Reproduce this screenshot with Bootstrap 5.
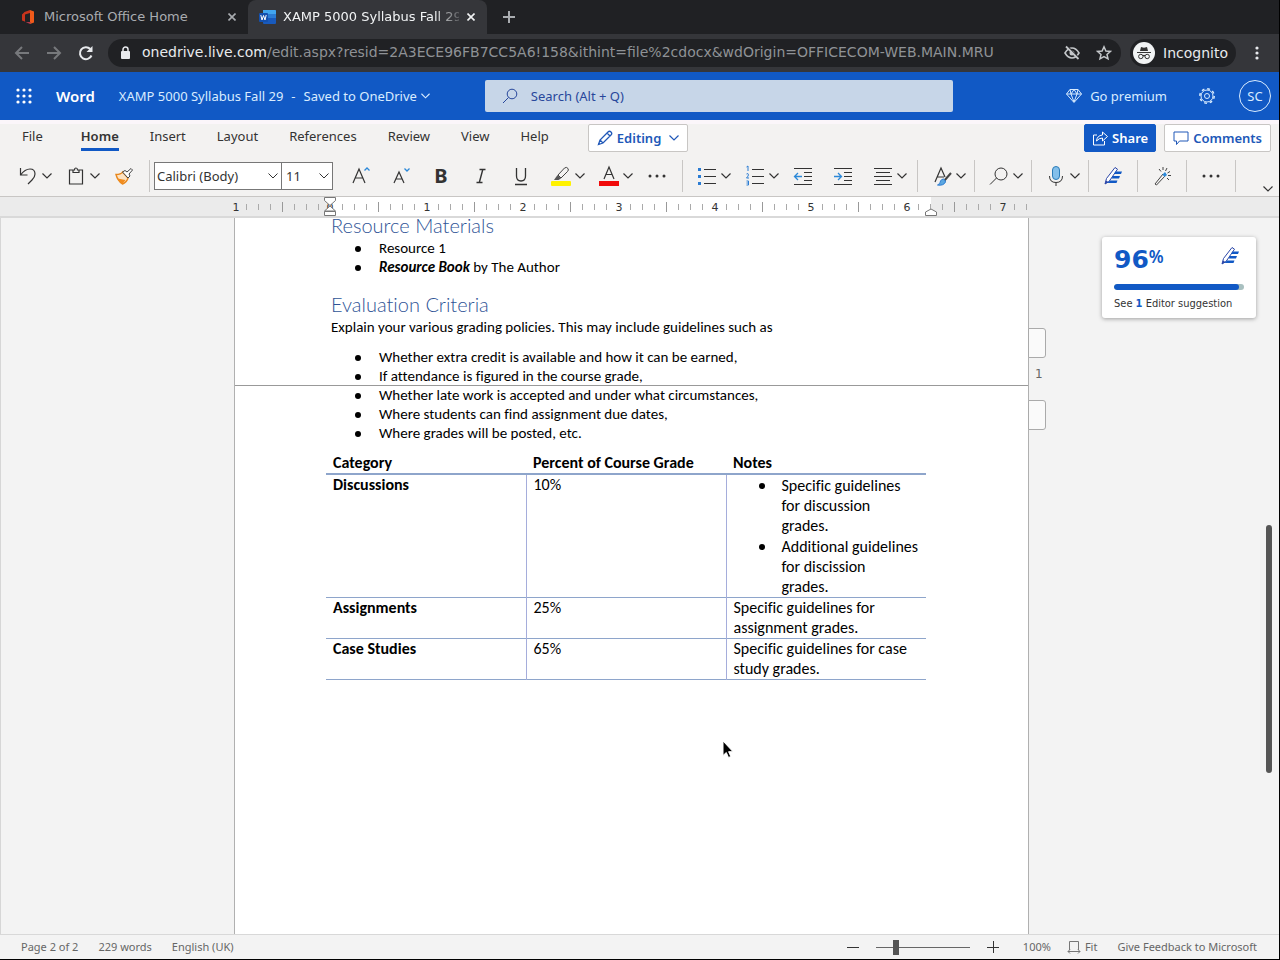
<!DOCTYPE html>
<html lang="en">
<head>
<meta charset="utf-8">
<meta name="viewport" content="width=device-width, initial-scale=1">
<title>XAMP 5000 Syllabus Fall 29</title>
<link href="https://cdn.jsdelivr.net/npm/bootstrap@5.3.0/dist/css/bootstrap.min.css" rel="stylesheet">
<style>
  :root { --word: #1159c5; --ribbon: #f3f2f1; --ink: #333; --ui: "Noto Sans", "Open Sans", sans-serif; --chrome: "DejaVu Sans", sans-serif; }
  body { font: 13px/20px var(--ui); color: var(--ink); height: 100vh; border-right: 1px solid #000; border-bottom: 1px solid #000; overflow: hidden; }
  svg { display: block; flex: none; fill: none; }
  button { background: none; border: 0; padding: 0; color: inherit; font: inherit; }
  .st { stroke: currentColor; stroke-width: 1; }
  .x2 { stroke: currentColor; stroke-width: 2; }

  /* browser frame */
  .tabstrip { background: #202124; height: 34px; font: 13px/32px var(--chrome); color: #a9acb0; }
  .btab { width: 248px; padding: 0 8px 0 21px; }
  .btab.current { width: 239px; background: #35363a; color: #f1f3f4; border-radius: 8px 8px 0 0; padding: 0 8px 0 11px; }
  .btab-title { overflow: hidden; white-space: nowrap; min-width: 0; margin-left: 9px; }
  .current .btab-title { margin: 0 4px 0 7px; -webkit-mask-image: linear-gradient(90deg, #000 86%, #0003); mask-image: linear-gradient(90deg, #000 86%, #0003); }
  .toolbar { background: #35363a; height: 38px; padding: 0 15px 0 14px; color: #e8eaed; font: 14px/28px var(--chrome); }
  .toolbar .nav-ico { width: 16px; margin-right: 16px; }
  .dim { color: #77797c; }
  .omnibox { background: #202124; border-radius: 14px; height: 28px; padding: 0 9px 0 12px; margin-left: -2px; white-space: nowrap; }
  .address { color: #8f9296; margin-left: 10px; line-height: 26px; padding-bottom: 2px; }
  .address span { color: #e8eaed; }
  .incog { background: #202124; border-radius: 14px; height: 28px; padding: 0 8px 0 3px; margin-left: 9px; }

  /* application header */
  .apphead { background: var(--word); height: 48px; color: #d9ecff; padding: 0 8px 0 16px; }
  .brandname { font-size: 15px; font-weight: 600; color: #fff; margin: 0 24px; }
  .titlebtn { width: 366px; text-align: left; }
  .titlebtn i { font-style: normal; margin: 0 8px; }
  .searchbox { background: #c7d6e8; border-radius: 2px; width: 468px; height: 32px; color: #27479b; padding-left: 17px; }
  .searchbox input { background: none; border: 0; padding: 0; color: inherit; font: inherit; outline: 0; margin-left: 13px; }
  .searchbox input::placeholder { color: #27479b; opacity: 1; }
  .gear { margin: 0 24px 0 32px; }
  .avatar { width: 32px; height: 32px; border: 1px solid #d9ecff; border-radius: 50%; text-align: center; }

  /* ribbon */
  .ribbon { background: var(--ribbon); border-bottom: 1px solid #c8c6c4; border-top: 4px solid #fbf6fa; }
  .rtabs { height: 32px; padding: 0 8px 0 22px; }
  .rtab { color: var(--ink); text-decoration: none; margin-right: 31px; padding: 2px 0 2px; height: 27px; border-bottom: 3px solid transparent; }
  .rtab:first-child { margin-right: 38px; }
  .rtab.active { font-weight: 600; border-color: var(--word); }
  .cmd { height: 28px; border: 1px solid #c8c6c4; border-radius: 2px; background: #fff; color: #2058b8; font-weight: 600; padding: 0 8px; display: flex; align-items: center; gap: 4px; }
  .cmd.primary { background: var(--word); border-color: var(--word); color: #fff; padding: 0 7px; }
  .tools { height: 40px; padding-left: 14px; position: relative; }
  .tgroup { display: flex; align-items: center; height: 32px; border-right: 1px solid #c8c6c4; padding: 0 8px 0 10px; }
  .tgroup.first { padding: 0 11px 0 0; }
  .tgroup.fonts { padding: 0 11px 0 4px; }
  .tgroup.solo { padding: 0 10px; }
  .tool { width: 28px; height: 32px; display: flex; align-items: center; justify-content: center; }
  .wide { width: 40px; }
  .split { width: 38px; height: 32px; display: flex; align-items: center; }
  .split > svg:first-child { margin-left: 3px; margin-right: 3px; }
  .pair { margin-right: 10px; }
  .fontbox { appearance: none; height: 28px; border: 1px solid #777; border-radius: 0; padding: 0 2px; color: var(--ink); font: inherit; background: #fff url("data:image/svg+xml,%3Csvg xmlns='http://www.w3.org/2000/svg' width='10' height='6' fill='none' stroke='%23333'%3E%3Cpath d='M.5.5 5 5 9.5.5'/%3E%3C/svg%3E") no-repeat right 3px center; }
  .fontname { width: 128px; }
  .fontsize { width: 52px; margin: 0 8px 0 -1px; padding-left: 4px; }
  .underl { margin-right: 6px; }
  .expand { position: absolute; right: 6px; bottom: 4px; }

  /* ruler */
  .ruler { background: #ebebeb; height: 21px; border-bottom: 2px solid #d9d9d9; padding-right: 7px; display: flex; justify-content: center; overflow: hidden; }
  .ruler text { font: 11px "DejaVu Sans", sans-serif; fill: #333; text-anchor: middle; }

  /* document */
  .workspace { background: #f3f3f3; overflow: hidden; min-height: 0; padding-right: 17px; border-left: 1px solid #d6d6d6; position: relative; }
  .sheet { display: flow-root; width: 795px; margin: 0 auto; background: #fff; border: 1px solid #b0b0b0; border-width: 0 1px; padding: 0 96px; position: relative; height: 100%; font: 15px/19px Carlito, Lato, sans-serif; font-variant-ligatures: none; color: #000; }
  .sheet h1 { font: 300 20px/24px Lato, Carlito, sans-serif; font-variant-ligatures: none; color: #2f5496; margin: 15px 0 2px; }
  .sheet h1:first-child { margin-top: -5px; }
  .sheet p { margin: 0 0 11px; }
  .dots { list-style: none; padding-left: 48px; margin: 0; }
  .criteria { margin-bottom: 10px; }
  .dots li::before { content: ""; display: inline-block; width: 6px; height: 6px; border-radius: 50%; background: #000; margin: 0 18px 0 -24px; vertical-align: 1px; }
  .pagebreak { position: absolute; left: 0; right: 0; top: 167px; margin: 0; border: 0; border-top: 1px solid #999; opacity: 1; }
  .grades { width: 600px; margin-left: -5px; table-layout: fixed; font-size: 16px; line-height: 20px; border-collapse: collapse; }
  .grades th, .grades td { padding: 0 7px; vertical-align: top; }
  .grades thead th { border-bottom: 2px solid #8ea5cb; }
  .grades tbody tr { border-bottom: 1px solid #8ea5cb; }
  .grades tbody td { border-left: 1px solid #a5addb; }
  .grades td .dots { margin-right: -4px; }
  .grades .dots li { margin-top: 1px; padding-right: 4px; }
  .grades .dots li::before { margin-right: 17px; margin-left: -23px; vertical-align: 2px; }
  .flag { position: absolute; left: 793px; width: 18px; height: 30px; border: 1px solid #aaa; border-radius: 0 3px 3px 0; background: #fafafa; }
  .flag.upper { top: 110px; }
  .flag.lower { top: 182px; }
  .flagnum { position: absolute; left: 800px; top: 146px; font: 12px/20px var(--chrome); color: #666; }
  .score { position: absolute; right: 23px; top: 19px; width: 154px; height: 81px; background: #fff; border-radius: 3px; box-shadow: 0 1px 4px rgba(0,0,0,.35); padding: 9px 12px; font: 11px/16px "DejaVu Sans Condensed", "DejaVu Sans", sans-serif; }
  .score b { color: var(--word); }
  .pct { font: bold 25px/28px var(--chrome); color: var(--word); }
  .pct small { font: 600 17px/22px "Noto Sans", sans-serif; }
  .score .progress { height: 6px; border-radius: 3px; background: #a9c0c0; margin: 10px 0 6px; }
  .score .progress-bar { background: var(--word); border-radius: 3px; }
  .thumb { position: absolute; right: 7px; top: 307px; width: 6px; height: 248px; border-radius: 3px; background: #555; }
  .pointer { position: absolute; left: 721px; top: 522px; }

  /* status bar */
  .status { background: #f3f3f3; border-top: 1px solid #d8d8d8; height: 25px; font-size: 11px; line-height: 24px; color: #666; padding: 0 22px 0 21px; }
  .status > span { margin-right: 20px; }
  .status button { color: #666; }
  .fitbtn { margin: 0 20px 0 16px; }
  .zoomer { appearance: none; width: 94px; height: 16px; margin: 0 17px; background: linear-gradient(#666, #666) center / 100% 1px no-repeat; }
  .zoomer::-webkit-slider-thumb { appearance: none; width: 6px; height: 15px; background: #555; }
</style>
</head>
<body class="d-flex flex-column">

<svg width="0" height="0" class="position-absolute" aria-hidden="true">
  <symbol id="chev" viewBox="0 0 10 6"><path class="st" style="stroke-width:1.2" d="M.5.5 5 5 9.5.5"/></symbol>
  <symbol id="close" viewBox="0 0 8 8"><path class="x2" d="M.5.5 7.5 7.5M7.5.5.5 7.5" style="stroke-width:1.6"/></symbol>
  <symbol id="editor" viewBox="0 0 20 20"><path d="M2 18 3.500 12.500 12 1.500 14.500 3.200 6 15.500Z" stroke="#2b46a8" fill="#fff"/><path d="M2 18 3 14.500 5.500 16Z" fill="#2b46a8"/><path d="M12.500 5.500h6.500l-1 2.500h-7zM10 10h7l-1 2.500H8.500zM7 14.500h7.500l-1 2.500H4.500z" fill="#1159c5"/></symbol>
</svg>

<header>
  <div class="tabstrip d-flex">
    <div class="btab d-flex align-items-center">
      <svg width="14" height="16" viewBox="0 0 14 16"><path d="M9 1 3.500 3 1 5.500v6L4 12.500V5.500L9 4z" fill="#c8341c"/><path d="M9 1l4 1.500v11L9 15z" fill="#f05a1a"/><path d="M2.500 12 9 15l1-2H4z" fill="#b5384c"/></svg>
      <span class="btab-title flex-fill">Microsoft Office Home</span>
      <button aria-label="Close tab" class="mx-1"><svg width="8" height="8"><use href="#close"/></svg></button>
    </div>
    <div class="btab current d-flex align-items-center">
      <svg width="17" height="16" viewBox="0 0 17 16"><rect x="4" y="1" width="13" height="14" rx="1" fill="#185abd"/><path d="M4 1h12q1 0 1 1v3H4z" fill="#41a5ee"/><path d="M4 5h13v4H4z" fill="#2b7cd3"/><rect y="4" width="9" height="9" rx="1" fill="#1450ad"/><path d="M1.800 6 3 11 4.500 6.500 6 11 7.200 6" stroke="#fff"/></svg>
      <span class="btab-title flex-fill">XAMP 5000 Syllabus Fall 29</span>
      <button aria-label="Close tab" class="mx-1"><svg width="8" height="8"><use href="#close"/></svg></button>
    </div>
    <button aria-label="New tab" class="ms-3"><svg width="12" height="12"><path class="x2" d="M6 0v12M0 6h12"/></svg></button>
  </div>

  <div class="toolbar d-flex align-items-center">
    <button aria-label="Back" class="nav-ico dim"><svg width="16" height="16"><path class="x2" d="M15 8H2M8 2 2 8l6 6"/></svg></button>
    <button aria-label="Forward" class="nav-ico dim"><svg width="16" height="16"><path class="x2" d="M1 8h13M8 2l6 6-6 6"/></svg></button>
    <button aria-label="Reload" class="nav-ico"><svg width="16" height="16"><path class="x2" d="M13.500 10.500A6 6 0 1 1 12.300 4"/><path d="M14.500 1v6h-6z" fill="currentColor"/></svg></button>
    <div class="omnibox d-flex align-items-center flex-fill">
      <svg width="12" height="14"><rect x="1" y="5" width="9" height="8" rx="1" fill="#e8eaed"/><path d="M3 5V3.500a2.500 2.500 0 0 1 5 0V5" stroke="#e8eaed" stroke-width="1.500"/></svg>
      <span class="address flex-fill"><span>onedrive.live.com</span>/edit.aspx?resid=2A3ECE96FB7CC5A6!158&amp;ithint=file%2cdocx&amp;wdOrigin=OFFICECOM-WEB.MAIN.MRU</span>
      <button aria-label="Third-party cookies blocked" class="me-3"><svg width="16" height="16"><path d="M1 8q3-5 7-5t7 5q-3 5-7 5T1 8z" stroke="#c4c7ca" stroke-width="1.600"/><circle cx="8" cy="8" r="2.500" fill="#c4c7ca"/><path d="M3.500 1.500 15.500 13.500" stroke="#202124" stroke-width="1.500"/><path d="M2 1.500 14.500 14" stroke="#c4c7ca" stroke-width="1.800"/></svg></button>
      <button aria-label="Bookmark"><svg width="16" height="16"><path d="M8 1.800 9.900 6l4.500.4-3.400 3 1 4.400L8 11.500 4 13.800l1-4.400-3.400-3L6.100 6z" stroke="#c4c7ca" stroke-width="1.500"/></svg></button>
    </div>
    <div class="incog d-flex align-items-center">
      <svg width="22" height="22"><circle cx="11" cy="11" r="11" fill="#f1f3f4"/><path d="M7 9l1-4 3 .7L14 5l1 4z" fill="#333"/><path d="M4 10.500h14M10 14q1-1 2 0" stroke="#333" stroke-width="1.200"/><circle cx="7.800" cy="14.500" r="2.200" stroke="#333"/><circle cx="14.200" cy="14.500" r="2.200" stroke="#333"/></svg>
      <span class="ms-2">Incognito</span>
    </div>
    <button aria-label="Browser menu" class="ms-3"><svg width="12" height="16"><g fill="#e8eaed"><circle cx="5" cy="3" r="1.600"/><circle cx="5" cy="8" r="1.600"/><circle cx="5" cy="13" r="1.600"/></g></svg></button>
  </div>

  <div class="apphead d-flex align-items-center">
    <button aria-label="App launcher"><svg width="16" height="16"><g fill="#fff"><circle cx="2" cy="2" r="1.600"/><circle cx="8" cy="2" r="1.600"/><circle cx="14" cy="2" r="1.600"/><circle cx="2" cy="8" r="1.600"/><circle cx="8" cy="8" r="1.600"/><circle cx="14" cy="8" r="1.600"/><circle cx="2" cy="14" r="1.600"/><circle cx="8" cy="14" r="1.600"/><circle cx="14" cy="14" r="1.600"/></g></svg></button>
    <span class="brandname">Word</span>
    <button class="titlebtn d-flex align-items-center">XAMP 5000 Syllabus Fall 29<i>-</i>Saved to OneDrive<svg class="ms-1" width="9" height="6"><use href="#chev"/></svg></button>
    <label class="searchbox d-flex align-items-center">
      <svg width="16" height="16"><circle class="st" cx="10" cy="6" r="4.800"/><path class="st" d="M6.500 9.500 1 15"/></svg>
      <input class="flex-fill" type="search" placeholder="Search (Alt + Q)" aria-label="Search">
    </label>
    <button class="d-flex align-items-center ms-auto"><svg class="me-2" width="16" height="16"><path class="st" d="M4 1.500h8L15.500 6 8 14.500.5 6zM.5 6h15M5 6l3 8 3-8L8 1.500zM4 1.500 5 6M12 1.500 11 6"/></svg>Go premium</button>
    <button aria-label="Settings" class="gear"><svg width="16" height="16" viewBox="0 0 16 16"><circle class="st" cx="8" cy="8" r="2.500"/><circle class="st" cx="8" cy="8" r="6"/><circle cx="8" cy="8" r="7.200" stroke="currentColor" stroke-width="1.500" stroke-dasharray="2.800 2.850"/></svg></button>
    <button class="avatar">SC</button>
  </div>
</header>

<div class="ribbon">
  <nav class="rtabs d-flex">
    <a class="rtab" href="#">File</a><a class="rtab active" href="#">Home</a><a class="rtab" href="#">Insert</a><a class="rtab" href="#">Layout</a><a class="rtab" href="#">References</a><a class="rtab" href="#">Review</a><a class="rtab" href="#">View</a><a class="rtab" href="#">Help</a>
    <button class="cmd ms-2"><svg width="16" height="16"><path class="st" d="M1.500 14.500 3 10 11 2q1.500-1.500 3 0t0 3l-8 8zM10 3l3 3M3 10l3 3" style="stroke-width:1.300"/></svg>Editing<svg class="ms-1" width="10" height="6"><use href="#chev"/></svg></button>
    <button class="cmd primary ms-auto me-2"><svg width="16" height="16"><path class="st" d="M5 5H1.500v10h11v-4M4.500 11Q5 5.500 10.500 5V2L15.500 6.500l-5 4.500V8Q7 8 4.500 11z"/></svg>Share</button>
    <button class="cmd"><svg width="16" height="16"><path class="st" d="M1 2h14v9H6.500L3.500 14.500V11H1z"/></svg>Comments</button>
  </nav>

  <div class="tools d-flex align-items-center">
    <div class="tgroup first">
      <button class="split pair" aria-label="Undo"><svg width="22" height="22"><path class="st" d="M3.500 3v7h7M3.500 10Q8 4 13 4q5 0 5 5 0 3-3 6l-4 4" style="stroke-width:1.200"/></svg><svg width="10" height="6"><use href="#chev"/></svg></button>
      <button class="split pair" aria-label="Paste"><svg width="22" height="22"><path class="st" d="M9 5H4.500v14h13V5H14M8 7.500V5h1.500q0-2 1.500-2t1.500 2H14v2.500z" style="stroke-width:1.200"/></svg><svg width="10" height="6"><use href="#chev"/></svg></button>
      <button class="tool" aria-label="Format painter"><svg width="20" height="20"><path d="M2 8.500q5 0 6.500-2.500l5.500 6q-1 4-5.500 6Q3.500 14.500 2 8.500z" fill="#fde3c3" stroke="#e8861a" stroke-width="1.400"/><path d="M3.500 12.500q4 .5 8 1.500L8.500 18q-3.500-2-5-5.500z" fill="#f28c1e"/><path d="M8.500 6 11 4.500l2 1.500 4-3.500 1.500 1.500-3.500 4L16 10l-2 2z" fill="#fff" stroke="#444"/></svg></button>
    </div>
    <div class="tgroup fonts">
      <select class="fontbox fontname" aria-label="Font"><option>Calibri (Body)</option></select>
      <select class="fontbox fontsize" aria-label="Font size"><option>11</option></select>
      <button class="tool wide" aria-label="Grow font"><svg width="20" height="20"><path class="st" d="M2 17 8 3l6 14M4 12h8" style="stroke-width:1.200"/><path d="M13.500 4.500 16 2l2.500 2.500" stroke="#2b88d8" stroke-width="1.300"/></svg></button>
      <button class="tool wide" aria-label="Shrink font"><svg width="20" height="20"><path class="st" d="M3 17 8 6l5 11M5 13h6" style="stroke-width:1.200"/><path d="M13.500 2.500 16 5l2.500-2.500" stroke="#2b88d8" stroke-width="1.300"/></svg></button>
      <button class="tool wide fw-bold fs-5" aria-label="Bold">B</button>
      <button class="tool wide" aria-label="Italic"><svg width="16" height="18"><path class="st" d="M6.500 2.500h6M3.500 15.500h6M9.800 2.500 6.300 15.500" style="stroke-width:1.400"/></svg></button>
      <button class="tool wide underl" aria-label="Underline"><svg width="16" height="20"><path class="st" d="M3.500 2v8q0 5 4.500 5t4.500-5V2M2 18.500h12" style="stroke-width:1.300"/></svg></button>
      <button class="split pair" aria-label="Highlight colour"><svg width="22" height="22"><rect x="1" y="16" width="20" height="5" rx="1" fill="#fff200"/><path d="M8 10 14.500 3q2-1.500 3.500.5 1 1.500-.5 3L11 13z" stroke="#444"/><path d="M7.500 10 11 13.500 8.500 15H4z" fill="#555"/></svg><svg width="10" height="6"><use href="#chev"/></svg></button>
      <button class="split pair" aria-label="Font colour"><svg width="22" height="22"><rect x="1" y="16" width="20" height="5" fill="#f10b0b"/><path class="st" d="M6 14 11 2l5 12M8 9.500h6" style="stroke-width:1.200"/></svg><svg width="10" height="6"><use href="#chev"/></svg></button>
      <button class="tool" aria-label="More font options"><svg width="20" height="6"><g fill="#333"><circle cx="3" cy="3" r="1.500"/><circle cx="10" cy="3" r="1.500"/><circle cx="17" cy="3" r="1.500"/></g></svg></button>
    </div>
    <div class="tgroup pe-1">
      <button class="split pair" aria-label="Bullets"><svg width="22" height="22"><path class="st" d="M8 4.500h12M8 11.500h12M8 18.500h12" style="stroke-width:1.200"/><path d="M2 3h3v3H2zM2 10h3v3H2zM2 17h3v3H2z" fill="#2b7cd3"/></svg><svg width="10" height="6"><use href="#chev"/></svg></button>
      <button class="split pair" aria-label="Numbering"><svg width="22" height="22"><path class="st" d="M8 4.500h12M8 11.500h12M8 18.500h12" style="stroke-width:1.200"/><path d="M2.500 2 4 1v5M2.500 9q2-1 2 .5T2.500 13H5M2.500 16h2v4h-2M2.500 18h2" stroke="#2b7cd3"/></svg><svg width="10" height="6"><use href="#chev"/></svg></button>
      <button class="tool me-2" aria-label="Decrease indent"><svg width="20" height="20"><path class="st" d="M1 2.500h18M11 6.500h8M11 10.500h8M11 14.500h8M1 18.500h18"/><path d="M9 10.500H2M5 7l-3.500 3.500L5 14" stroke="#2b88d8" stroke-width="1.300"/></svg></button>
      <button class="tool ms-1" aria-label="Increase indent"><svg width="20" height="20"><path class="st" d="M1 2.500h18M11 6.500h8M11 10.500h8M11 14.500h8M1 18.500h18"/><path d="M1 10.500h7M5 7l3.500 3.500L5 14" stroke="#2b88d8" stroke-width="1.300"/></svg></button>
      <button class="split pair ms-2 ps-1" aria-label="Alignment"><svg width="22" height="22"><path class="st" d="M2 3.500h18M4 7.500h14M2 11.500h18M4 15.500h14M2 19.500h18"/></svg><svg width="10" height="6"><use href="#chev"/></svg></button>
    </div>
    <div class="tgroup"><button class="split" aria-label="Styles"><svg width="22" height="22"><path class="st" d="M4 17 10 3l4 9M6 12h7" style="stroke-width:1.200"/><path d="M20 8l-7 8" stroke="#444" stroke-width="2"/><path d="M12.500 14q2 1 2 3-2 4-8 3 3-1 3-4 1-2 3-2z" fill="#5ba7e0" stroke="#2b7cd3"/></svg><svg width="10" height="6"><use href="#chev"/></svg></button></div>
    <div class="tgroup"><button class="split" aria-label="Find"><svg width="22" height="22"><circle class="st" cx="13" cy="9" r="6"/><path class="st" d="M8.500 13 2 19.500"/></svg><svg width="10" height="6"><use href="#chev"/></svg></button></div>
    <div class="tgroup"><button class="split" aria-label="Dictate"><svg width="22" height="22"><rect x="7.500" y="1.500" width="7" height="13" rx="3.500" fill="#83bfea" stroke="#2b7cb8"/><path class="st" d="M4.500 11q0 6.500 6.500 6.500t6.500-6.500M11 17.500V21"/></svg><svg width="10" height="6"><use href="#chev"/></svg></button></div>
    <div class="tgroup solo"><button class="tool" aria-label="Editor"><svg width="20" height="20"><use href="#editor"/></svg></button></div>
    <div class="tgroup solo"><button class="tool" aria-label="Designer"><svg width="20" height="20"><path d="M3 18 11 8l2 2-8.500 9z" stroke="#444"/><path d="M10.500 8.500 13 6l2 3-2.500 2z" fill="#2b88d8"/><path d="M11 1v3M15 2l-1.500 3M18 5.500 15.500 7M16 9.500h3M15 12l2 2M7 3l2 2.500" stroke="#444"/></svg></button></div>
    <div class="tgroup solo"><button class="tool" aria-label="More commands"><svg width="20" height="6"><g fill="#333"><circle cx="3" cy="3" r="1.500"/><circle cx="10" cy="3" r="1.500"/><circle cx="17" cy="3" r="1.500"/></g></svg></button></div>
    <button class="expand" aria-label="Ribbon options"><svg width="10" height="6"><use href="#chev"/></svg></button>
  </div>
</div>

<div class="ruler">
  <svg width="813" height="19">
    <defs>
      <pattern id="minor" width="12" height="19" patternUnits="userSpaceOnUse" x="4"><path d="M0.500 7v6" stroke="#aaa"/></pattern>
      <pattern id="major" width="96" height="19" patternUnits="userSpaceOnUse" x="52"><path d="M0.500 5v10" stroke="#999"/></pattern>
    </defs>
    <rect x="100" width="601" height="19" fill="#fff"/>
    <rect x="12" width="786" height="19" fill="url(#minor)"/>
    <rect x="12" width="786" height="19" fill="url(#major)"/>
    <g fill="#fff"><rect x="191" y="3" width="12" height="13"/><rect x="287" y="3" width="12" height="13"/><rect x="383" y="3" width="12" height="13"/><rect x="479" y="3" width="12" height="13"/><rect x="575" y="3" width="12" height="13"/><rect x="671" y="3" width="12" height="13"/></g>
    <rect x="767" y="3" width="12" height="13" fill="#ebebeb"/>
    <text x="6" y="14">1</text><text x="100" y="14">0</text><text x="197" y="14">1</text><text x="293" y="14">2</text><text x="389" y="14">3</text><text x="485" y="14">4</text><text x="581" y="14">5</text><text x="677" y="14">6</text><text x="773" y="14">7</text>
    <path d="M94.500.500h11v3l-5.500 5-5.500-5zM100 9l5.500 5H94.500zM94.500 14.500h11v4h-11zM701 12l5.500 3v3.500h-11V15z" fill="#fff" stroke="#777"/>
  </svg>
</div>

<main class="workspace flex-fill">
  <article class="sheet">
    <h1>Resource Materials</h1>
    <ul class="dots">
      <li>Resource 1</li>
      <li><b><i>Resource Book</i></b> by The Author</li>
    </ul>
    <h1>Evaluation Criteria</h1>
    <p>Explain your various grading policies. This may include guidelines such as</p>
    <ul class="dots criteria">
      <li>Whether extra credit is available and how it can be earned,</li>
      <li>If attendance is figured in the course grade,</li>
      <li>Whether late work is accepted and under what circumstances,</li>
      <li>Where students can find assignment due dates,</li>
      <li>Where grades will be posted, etc.</li>
    </ul>
    <table class="grades">
      <thead><tr><th>Category</th><th>Percent of Course Grade</th><th>Notes</th></tr></thead>
      <tbody>
        <tr><th>Discussions</th><td>10%</td><td><ul class="dots"><li>Specific guidelines for discussion grades.</li><li>Additional guidelines for discission<br>grades.</li></ul></td></tr>
        <tr><th>Assignments</th><td>25%</td><td>Specific guidelines for assignment grades.</td></tr>
        <tr><th>Case Studies</th><td>65%</td><td>Specific guidelines for case study grades.</td></tr>
      </tbody>
    </table>
    <hr class="pagebreak">
    <div class="flag upper"></div>
    <span class="flagnum">1</span>
    <div class="flag lower"></div>
  </article>

  <aside class="score">
    <div class="d-flex justify-content-between"><span class="pct d-flex">96<small>%</small></span><svg width="20" height="20" class="me-1"><use href="#editor"/></svg></div>
    <div class="progress" role="progressbar" aria-label="Editor score" aria-valuenow="96" aria-valuemin="0" aria-valuemax="100"><div class="progress-bar" style="width:96%"></div></div>
    See <b>1</b> Editor suggestion
  </aside>
  <div class="thumb"></div>
  <svg class="pointer" width="14" height="20"><path d="M1 1v14.500l3.300-3 2.200 5 2.300-1-2.200-4.800H11z" fill="#000" stroke="#fff"/></svg>
</main>

<footer class="status d-flex align-items-center">
  <span>Page 2 of 2</span><span>229 words</span><span>English (UK)</span>
  <button class="ms-auto" aria-label="Zoom out"><svg width="12" height="12"><path d="M0 6.500h12" stroke="#333"/></svg></button>
  <input class="zoomer" type="range" min="0" max="100" value="20" aria-label="Zoom">
  <button aria-label="Zoom in"><svg width="12" height="12"><path d="M0 6.500h12M6.500 0v12" stroke="#333"/></svg></button>
  <button class="ms-4">100%</button>
  <button class="fitbtn d-flex align-items-center"><svg class="me-1" width="14" height="14"><path d="M2.500 10V1.500h9V10M1 11.500h12M3 9.500l-2 2 2 2M11 9.500l2 2-2 2" stroke="#777"/></svg>Fit</button>
  <a href="#" class="text-reset text-decoration-none">Give Feedback to Microsoft</a>
</footer>

<script src="https://cdn.jsdelivr.net/npm/bootstrap@5.3.0/dist/js/bootstrap.bundle.min.js"></script>
</body>
</html>
